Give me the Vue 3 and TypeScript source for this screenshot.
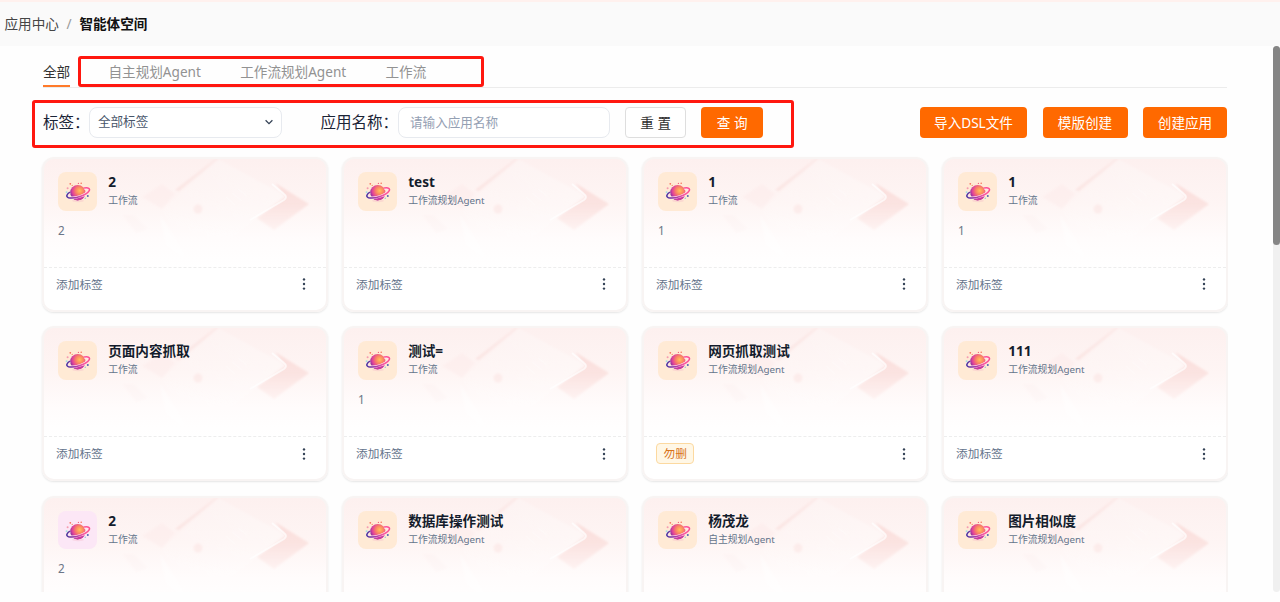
<script setup lang="ts">
interface AppCard {
  name: string
  kind: string
  desc?: string
  tag?: string
  pink?: boolean
  collapsed?: boolean
}

const tabs: string[] = ['自主规划Agent', '工作流规划Agent', '工作流']

const cards: AppCard[] = [
  { name: '2', kind: '工作流', desc: '2' },
  { name: 'test', kind: '工作流规划Agent' },
  { name: '1', kind: '工作流', desc: '1' },
  { name: '1', kind: '工作流', desc: '1' },
  { name: '页面内容抓取', kind: '工作流' },
  { name: '测试=', kind: '工作流', desc: '1' },
  { name: '网页抓取测试', kind: '工作流规划Agent', tag: '勿删' },
  { name: '111', kind: '工作流规划Agent' },
  { name: '2', kind: '工作流', desc: '2', pink: true, collapsed: true },
  { name: '数据库操作测试', kind: '工作流规划Agent', collapsed: true },
  { name: '杨茂龙', kind: '自主规划Agent', collapsed: true },
  { name: '图片相似度', kind: '工作流规划Agent', collapsed: true },
]
</script>

<template>
  <div class="page">
    <svg class="defs" width="0" height="0">
      <defs>
        <radialGradient id="planetFill" cx="0.62" cy="0.38" r="0.7">
          <stop offset="0" stop-color="#ffc45c" />
          <stop offset="0.35" stop-color="#fb8563" />
          <stop offset="0.68" stop-color="#e2419a" />
          <stop offset="1" stop-color="#6a2d9c" />
        </radialGradient>
        <linearGradient id="ringFill" x1="0" y1="0" x2="1" y2="0">
          <stop offset="0" stop-color="#45349c" />
          <stop offset="0.4" stop-color="#a93ba8" />
          <stop offset="0.75" stop-color="#fb5aa0" />
          <stop offset="1" stop-color="#ff4f8e" />
        </linearGradient>
        <linearGradient id="wingFill" gradientUnits="userSpaceOnUse" x1="238" y1="26" x2="238" y2="70">
          <stop offset="0" stop-color="#f8cdc9" stop-opacity="0.55" />
          <stop offset="0.5" stop-color="#f9d3d0" stop-opacity="0.5" />
          <stop offset="1" stop-color="#fce3e1" stop-opacity="0.35" />
        </linearGradient>
        <linearGradient id="slabFill" x1="1" y1="0.3" x2="0" y2="0.8">
          <stop offset="0" stop-color="#fff" stop-opacity="0.3" />
          <stop offset="1" stop-color="#fff" stop-opacity="0.05" />
        </linearGradient>
        <linearGradient id="edgeFill" gradientUnits="userSpaceOnUse" x1="133" y1="31" x2="175" y2="0">
          <stop offset="0" stop-color="#f8d8d5" stop-opacity="0.5" />
          <stop offset="1" stop-color="#f8d8d5" stop-opacity="0.25" />
        </linearGradient>
        <filter id="soft" x="-10%" y="-10%" width="120%" height="120%">
          <feGaussianBlur stdDeviation="1.2" />
        </filter>
      </defs>
    </svg>

    <header class="crumbs">
      <span>应用中心</span><i>/</i><b>智能体空间</b>
    </header>

    <main class="scroller">
      <div class="content">
        <nav class="tabs">
          <div class="tab active">全部</div>
          <div class="marked">
            <div v-for="t in tabs" :key="t" class="tab">{{ t }}</div>
          </div>
        </nav>

        <div class="toolbar">
          <div class="filters">
            <label>标签：</label>
            <div class="field select">
              <span>全部标签</span>
              <svg width="10" height="8" viewBox="0 0 10 8"><path d="M1.6 2.2 5 5.6 8.4 2.2" fill="none" stroke="#334155" stroke-width="1.25" /></svg>
            </div>
            <label class="second">应用名称：</label>
            <div class="field input">请输入应用名称</div>
            <button class="btn plain">重 置</button>
            <button class="btn query">查 询</button>
          </div>
          <div class="actions">
            <button class="btn import">导入DSL文件</button>
            <button class="btn template">模版创建</button>
            <button class="btn create">创建应用</button>
          </div>
        </div>

        <section class="grid">
          <article v-for="(c, i) in cards" :key="i" class="card">
            <svg class="art" viewBox="0 0 282 110" preserveAspectRatio="none">
              <g filter="url(#soft)">
                <path d="M98 38 118 25 131 35 118 50Z" fill="#fae0dd" opacity="0.22" />
                <path d="M78 56 90 56 104 70 92 74Z" fill="#fbe6e4" opacity="0.15" />
                <path d="M131 31 172 -1 176 -1 135 32Z" fill="url(#edgeFill)" />
                <path d="M231 24 265 45 230 71 213 59 242 38Z" fill="url(#wingFill)" />
                <path d="M174 0 240 36 190 78 140 95 118 52Z" fill="url(#slabFill)" />
                <path d="M116 56 140 94 140 100 122 86Z" fill="#fff" opacity="0.4" />
                <circle cx="154" cy="50" r="4.5" fill="#f9dcd9" opacity="0.4" />
              </g>
              <path d="M206 61 240 41Q244 38 240 35L228 25" fill="none" stroke="#fff" stroke-width="1.8" opacity="0.65" />
              <path d="m182 38 9 8m-3-12 10 8m-4-12 9 7" fill="none" stroke="#fff" stroke-width="1.2" opacity="0.25" />
            </svg>
            <div class="head">
              <div class="avatar" :class="{ pink: c.pink }">
                <svg width="38" height="38" viewBox="0 0 38 38">
                  <ellipse cx="20" cy="28.8" rx="6" ry="1.4" fill="#f3b6c9" opacity="0.35" />
                  <circle cx="19.8" cy="20.6" r="7.7" fill="url(#planetFill)" />
                  <path d="M13 24.6Q20 26.8 27 22.9A7.7 7.7 0 0 1 13 24.6Z" fill="#cb3b9f" />
                  <path d="M26.3 16.7C30 15.8 32 16.5 30.8 19C28.2 23.2 16.5 27 10.9 25.5C7.4 24.5 8.8 22 11.9 20.2" fill="none" stroke="#ffe3ec" stroke-width="2.6" />
                  <path d="M26 16.1C30.6 15.2 32.4 16.7 31.1 18.9C28.5 23.2 16.5 27.3 10.5 25.7C7.4 24.7 9 22 11.9 20.2" fill="none" stroke="url(#ringFill)" stroke-width="1.5" />
                  <circle cx="12.3" cy="11.8" r="0.9" fill="#fb735e" />
                  <circle cx="14.2" cy="13.4" r="0.6" fill="#f08c5c" />
                  <circle cx="20.4" cy="11.4" r="0.6" fill="#f25c7d" />
                  <circle cx="23.2" cy="11.3" r="0.8" fill="#fb735e" />
                  <circle cx="9.6" cy="16.3" r="1" fill="#f59bb0" />
                  <circle cx="8.6" cy="20.3" r="1" fill="#a6e2df" />
                  <circle cx="29.8" cy="24" r="1" fill="#5661b5" />
                  <circle cx="27.2" cy="26.2" r="0.7" fill="#83c6dd" />
                </svg>
              </div>
              <div class="titles">
                <h3>{{ c.name }}</h3>
                <p>{{ c.kind }}</p>
              </div>
            </div>
            <div class="desc">{{ c.desc }}</div>
            <footer v-if="!c.collapsed" class="foot">
              <span v-if="c.tag" class="tag">{{ c.tag }}</span>
              <span v-else class="add">添加标签</span>
              <svg width="4" height="14" viewBox="0 0 4 14" fill="#334155"><circle cx="2" cy="2.4" r="1.2" /><circle cx="2" cy="7" r="1.2" /><circle cx="2" cy="11.6" r="1.2" /></svg>
            </footer>
          </article>
        </section>
      </div>
      <div class="track"><div class="thumb"></div></div>
    </main>
  </div>
</template>

<style>
body {
  margin: 0;
  background: #fff;
  overflow: hidden;
}
</style>

<style scoped>
* {
  box-sizing: border-box;
}
.page {
  width: 1280px;
  height: 602px;
  overflow: hidden;
  background: #fefefe;
  font-family: "Noto Sans", "Noto Sans CJK SC", sans-serif;
  font-size: 13.6px;
  color: #1f2937;
}
.defs {
  display: block;
}
.crumbs {
  height: 46px;
  border-top: 2px solid #fff1ee;
  background: #fafafa;
  padding: 0 0 1px 4.5px;
  display: flex;
  align-items: center;
  line-height: 20px;
  color: #454545;
}
.crumbs i {
  width: 20.5px;
  text-align: center;
  font-style: normal;
  color: #999;
}
.crumbs b {
  color: #111;
}
.scroller {
  display: flex;
  justify-content: space-between;
  height: 556px;
}
.content {
  width: 1228px;
  height: 546px;
  overflow: hidden;
  padding: 10px 0 0 32px;
}
.tabs {
  height: 32px;
  margin-left: 11px;
  display: flex;
  width: 1184px;
  background: linear-gradient(#ececec, #ececec) 0 31px / 100% 1px no-repeat;
}
.tab {
  line-height: 20px;
  color: #929292;
  white-space: nowrap;
}
.tab.active {
  width: 27px;
  height: 31px;
  padding-top: 6px;
  border-bottom: 2px solid #ff7a2a;
  color: #333;
}
.marked {
  margin-left: 8px;
  width: 406px;
  height: 31px;
  border: 3px solid #ff170f;
  border-radius: 3px;
  padding: 3px 0 0 27.5px;
  display: flex;
  gap: 39.3px;
}
.toolbar {
  margin-top: 12px;
  display: flex;
  width: 1195px;
  justify-content: space-between;
}
.filters {
  width: 762px;
  height: 48px;
  flex: none;
  border: 3px solid #ff170f;
  border-radius: 3px;
  display: flex;
  align-items: center;
  padding: 0 0 4px 8px;
}
label {
  width: 46.4px;
  white-space: nowrap;
  font-size: 15.5px;
  line-height: 24px;
  color: #1b2436;
}
label.second {
  width: 77.6px;
  margin-left: 38px;
}
.field {
  height: 31px;
  border: 1px solid #e7eaef;
  border-radius: 8px;
  background: #fff;
  display: flex;
  align-items: center;
  font-size: 12.6px;
  line-height: 18px;
}
.select {
  width: 193px;
  justify-content: space-between;
  padding: 0 7.5px 1px 7.5px;
  color: #475569;
}
.input {
  width: 212px;
  padding: 1px 0 0 11px;
  color: #94a0b3;
}
.btn {
  height: 31px;
  border: 0;
  border-radius: 4px;
  background: #ff6900;
  color: #fff;
  font: inherit;
  line-height: 31px;
  padding: 0;
  text-align: center;
  white-space: nowrap;
}
.plain {
  width: 61.5px;
  margin-left: 15px;
  background: #fff;
  border: 1px solid #dedede;
  color: #2f2f2f;
  line-height: 29px;
}
.query {
  width: 61.5px;
  margin-left: 15px;
}
.actions {
  display: flex;
  gap: 15.5px;
  padding-top: 6.5px;
}
.actions .btn {
  line-height: 32px;
}
.import {
  width: 107px;
}
.template {
  width: 85px;
}
.create {
  width: 84px;
}
.grid {
  width: 1186px;
  margin: 9px 0 0 10px;
  display: grid;
  grid-template-columns: repeat(4, 286px);
  grid-auto-rows: 155px;
  gap: 14.4px 14px;
}
.card {
  position: relative;
  border: 2px solid #f8f4f3;
  border-radius: 12px;
  background: linear-gradient(#fdf0ef, #fef5f4 45px, #fffcfc 80px, #fff 110px);
  box-shadow: 0 1px 2px rgba(0, 0, 0, 0.1);
  overflow: hidden;
}
.art {
  position: absolute;
  left: 0;
  top: 0;
  width: 100%;
  height: 110px;
}
.head {
  position: relative;
  display: flex;
  padding: 13px 0 0 14.4px;
}
.avatar {
  width: 38.5px;
  height: 38.5px;
  border-radius: 8px;
  background: #ffead5;
}
.avatar.pink {
  background: #fce7f6;
}
.avatar svg {
  display: block;
}
.titles {
  padding-left: 11.3px;
}
h3 {
  margin: 0;
  font-size: 13.6px;
  line-height: 20px;
  font-weight: 700;
  color: #131c2c;
}
p {
  margin: 0;
  font-size: 9.8px;
  line-height: 17px;
  color: #64748b;
}
.desc {
  position: relative;
  height: 56px;
  padding: 11px 0 0 14px;
  font-size: 11.7px;
  line-height: 16px;
  color: #6b7688;
}
.foot {
  position: relative;
  height: 35px;
  border-top: 1px dashed #ededed;
  display: flex;
  align-items: center;
  justify-content: space-between;
  padding: 0 20px 0.5px 12px;
  font-size: 11.7px;
  line-height: 18px;
  color: #64748b;
}
.add {
  padding-bottom: 1.5px;
}
.tag {
  height: 21px;
  padding: 0 6.5px;
  border: 1px solid #fcd9a0;
  border-radius: 4px;
  background: #fff7e6;
  color: #d9731a;
  line-height: 19px;
}
.track {
  width: 7px;
  height: 546px;
  border-radius: 4px;
  background: #f0f0f0;
}
.thumb {
  height: 199px;
  border-radius: 4px;
  background: #858585;
}
</style>
